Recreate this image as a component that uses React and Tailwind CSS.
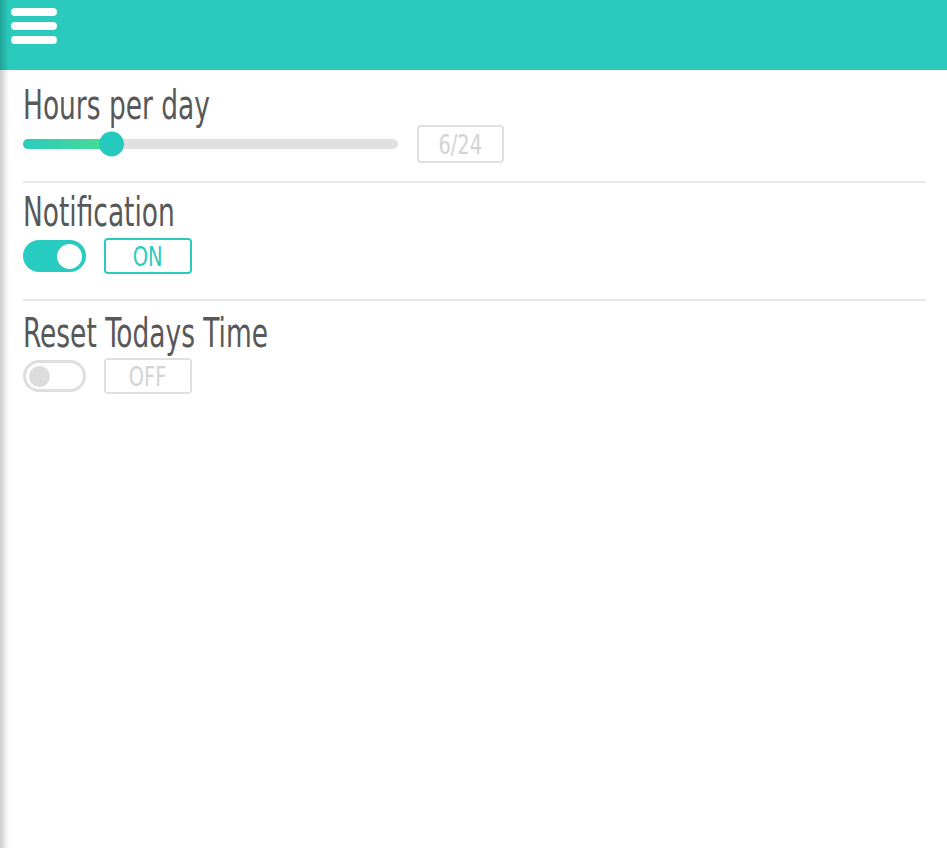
const FONT = {
  fontFamily: '"DejaVu Sans Condensed", "Liberation Sans", sans-serif',
};

function Hamburger() {
  return (
    <button className="flex flex-col gap-[6px] pl-[11px] pt-[8px]">
      <span className="block h-[8px] w-[46px] rounded-full bg-white" />
      <span className="block h-[8px] w-[46px] rounded-full bg-white" />
      <span className="block h-[8px] w-[46px] rounded-full bg-white" />
    </button>
  );
}

function Toggle({ on }) {
  return on ? (
    <span className="flex h-[32px] w-[63px] items-center justify-end rounded-full bg-[#28cbc0] pr-[4px]">
      <span className="size-[25px] rounded-full bg-white" />
    </span>
  ) : (
    <span className="flex h-[32px] w-[63px] items-center rounded-full border-[3px] border-[#dedede] bg-white pl-[3px]">
      <span className="size-[21px] rounded-full bg-[#dcdcdc]" />
    </span>
  );
}

function ValueBox({ children, active, className }) {
  return (
    <span
      className={`flex items-center justify-center rounded-[4px] border-2 ${className} ${
        active ? "border-[#2acbbd] text-[#2acbbd]" : "border-[#e0e0e0] text-[#d3d3d3]"
      }`}
    >
      <span className="inline-block scale-x-[0.8] text-[27px] font-light leading-none">{children}</span>
    </span>
  );
}

function Title({ children, className }) {
  return (
    <h2 className={`${className} text-[40px] leading-[44px] text-[#585858]`}>
      <span className="inline-block origin-left scale-x-[0.735] whitespace-nowrap">{children}</span>
    </h2>
  );
}

export default function App() {
  return (
    <div className="relative min-h-[848px] bg-white" style={FONT}>
      <header className="h-[70px] bg-[#2acbbd]">
        <Hamburger />
      </header>

      <main className="pl-[23px] pr-[21px]">
        <section className="border-b-2 border-[#e8e8e8] pb-[18px] pt-[13px]">
          <Title className="h-[42px]">Hours per day</Title>
          <div className="flex items-center gap-[19px]">
            <div className="relative h-[10px] w-[375px] rounded-full bg-[#e0e0e0]">
              <div className="h-full w-[90px] rounded-full bg-gradient-to-r from-[#2acbbd] to-[#4ade8f]" />
              <span className="absolute left-[76px] top-1/2 size-[25px] -translate-y-1/2 rounded-full bg-[#26c9be]" />
            </div>
            <ValueBox className="h-[38px] w-[87px]">6/24</ValueBox>
          </div>
        </section>

        <section className="border-b-2 border-[#e8e8e8] pb-[25px] pt-[7px]">
          <Title className="h-[48px]">Notification</Title>
          <div className="flex items-center gap-[18px]">
            <Toggle on />
            <ValueBox active className="h-[36px] w-[88px]">ON</ValueBox>
          </div>
        </section>

        <section className="pt-[10px]">
          <Title className="h-[47px]">Reset Todays Time</Title>
          <div className="flex items-center gap-[18px]">
            <Toggle />
            <ValueBox className="h-[36px] w-[88px]">OFF</ValueBox>
          </div>
        </section>
      </main>

      <div className="pointer-events-none absolute inset-y-0 left-0 w-[9px] bg-gradient-to-r from-black/20 to-transparent" />
    </div>
  );
}
